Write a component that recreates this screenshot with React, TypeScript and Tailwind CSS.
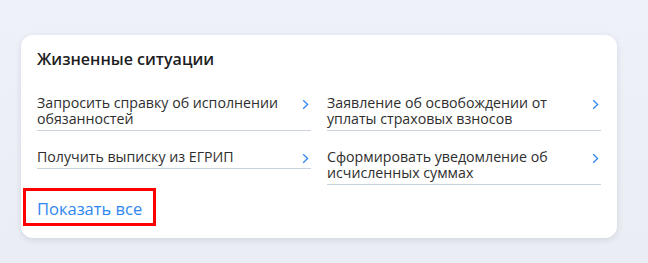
const ITEMS = [
  'Запросить справку об исполнении обязанностей',
  'Заявление об освобождении от уплаты страховых взносов',
  'Получить выписку из ЕГРИП',
  'Сформировать уведомление об исчисленных суммах',
]

function Chevron() {
  return (
    <svg width="7" height="11" viewBox="0 0 7 11" className="mt-[4px] mr-[2px] shrink-0" fill="none">
      <path d="M1.2 1.2 L5.6 5.5 L1.2 9.8" stroke="#2f86f0" strokeWidth="1.3" />
    </svg>
  )
}

export default function App() {
  return (
    <div
      className="h-[263px] w-[648px] bg-gradient-to-b from-[#eef1f8] to-[#eaedf3] pt-[35px] pl-[21px]"
      style={{ fontFamily: '"Open Sans", "Noto Sans", sans-serif' }}
    >
      <div className="w-[596px] rounded-[12px] bg-white px-4 pt-[12px] pb-3 shadow-[0_2px_6px_rgba(40,50,80,0.12)]">
        <h2 className="text-[16px] leading-6 font-semibold text-[#1d1d1f]">Жизненные ситуации</h2>

        <div className="mt-[24px] grid grid-cols-2 items-start gap-x-4 gap-y-[18px]">
          {ITEMS.map((t) => (
            <a
              key={t}
              href="#"
              className="flex justify-between gap-3 border-b border-[#c9d2de] pb-[3px] text-[14.2px] leading-4 text-[#2e2e2e]"
            >
              <span className="max-w-[250px]">{t}</span>
              <Chevron />
            </a>
          ))}
        </div>

        <div className="mt-[3px] -ml-[14px]">
          <a
            href="#"
            className="inline-block border-[3px] border-[#ff0000] px-[11px] pt-[6px] pb-[2px] text-[16.5px] leading-6 text-[#2f86f0]"
          >
            Показать все
          </a>
        </div>
      </div>
    </div>
  )
}
